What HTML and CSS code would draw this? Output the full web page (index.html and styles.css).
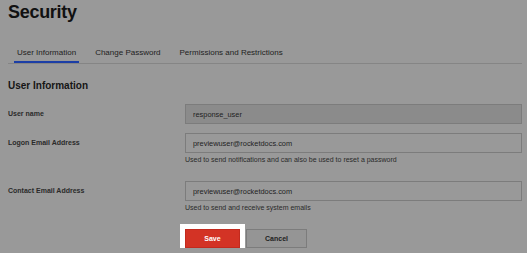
FILE: index.html
```html
<!DOCTYPE html>
<html lang="en">
<head>
    <meta charset="UTF-8">
    <meta name="viewport" content="width=device-width, initial-scale=1.0">
    <title>Security</title>
    <link rel="stylesheet" href="styles.css">
</head>
<body>
    <div class="page">
        <h1 class="title">Security</h1>

        <div class="tabs">
            <a href="#" class="tab active">User Information</a>
            <a href="#" class="tab">Change Password</a>
            <a href="#" class="tab">Permissions and Restrictions</a>
        </div>

        <h2 class="section-title">User Information</h2>

        <form class="form">
            <div class="field">
                <label class="label">User name</label>
                <div class="control">
                    <input class="input" type="text" value="response_user" disabled>
                </div>
            </div>
            <div class="field">
                <label class="label">Logon Email Address</label>
                <div class="control">
                    <input class="input" type="text" value="previewuser@rocketdocs.com">
                    <p class="help">Used to send notifications and can also be used to reset a password</p>
                </div>
            </div>
            <div class="field">
                <label class="label">Contact Email Address</label>
                <div class="control">
                    <input class="input" type="text" value="previewuser@rocketdocs.com">
                    <p class="help">Used to send and receive system emails</p>
                </div>
            </div>
            <div class="actions">
                <button type="button" class="btn btn-save">Save</button>
                <button type="button" class="btn btn-cancel">Cancel</button>
            </div>
        </form>
    </div>
</body>
</html>
```

FILE: styles.css
```css
body {
    font-family: "Liberation Sans", Arial, sans-serif;
    margin: 0;
    padding: 0;
    background-color: #999999;
    color: #1e1e1e;
    overflow: hidden;
}
.page {
    padding: 1px 5px 0 8px;
}
.title {
    margin: 0;
    font-size: 18px;
    line-height: 22px;
    letter-spacing: -0.3px;
    font-weight: bold;
    color: #111;
}
.tabs {
    display: flex;
    gap: 13px;
    margin-top: 25px;
    padding-left: 6px;
    border-bottom: 1px solid #858585;
}
.tab {
    padding: 0 3px 3px;
    font-size: 8px;
    line-height: 10px;
    color: #222;
    text-decoration: none;
    border-bottom: 2px solid transparent;
}
.tab.active {
    border-bottom-color: #1c3ea6;
}
.section-title {
    margin: 16px 0 0;
    font-size: 10px;
    line-height: 12px;
    font-weight: bold;
    color: #151515;
}
.form {
    margin-top: 12px;
}
.field {
    display: flex;
    padding-bottom: 9px;
}
.label {
    width: 177px;
    flex-shrink: 0;
    font-size: 7px;
    line-height: 20px;
    font-weight: bold;
    color: #2a2a2a;
}
.control {
    flex: 1;
}
.input {
    display: block;
    box-sizing: border-box;
    width: 100%;
    height: 20px;
    margin: 0;
    padding: 0 7px;
    font-family: inherit;
    font-size: 7.4px;
    line-height: 12px;
    color: #222;
    background-color: #999999;
    border: 1px solid #7c7c7c;
    border-radius: 0;
}
.input:disabled {
    background-color: #8b8b8b;
    color: #222;
}
.help {
    margin: 2px 0 7px;
    font-size: 7px;
    line-height: 10px;
    color: #2a2a2a;
}
.actions {
    display: flex;
    gap: 6px;
    padding-left: 177px;
}
.btn {
    height: 19px;
    padding: 0;
    font-family: inherit;
    font-size: 7px;
    font-weight: bold;
    border-radius: 0;
    cursor: pointer;
}
.btn-save {
    width: 55px;
    background-color: #d33325;
    color: white;
    border: 1px solid #c22a1e;
    box-shadow: 0 0 0 5px white;
}
.btn-cancel {
    width: 61px;
    background-color: #959595;
    color: #222;
    border: 1px solid #7c7c7c;
}
```
